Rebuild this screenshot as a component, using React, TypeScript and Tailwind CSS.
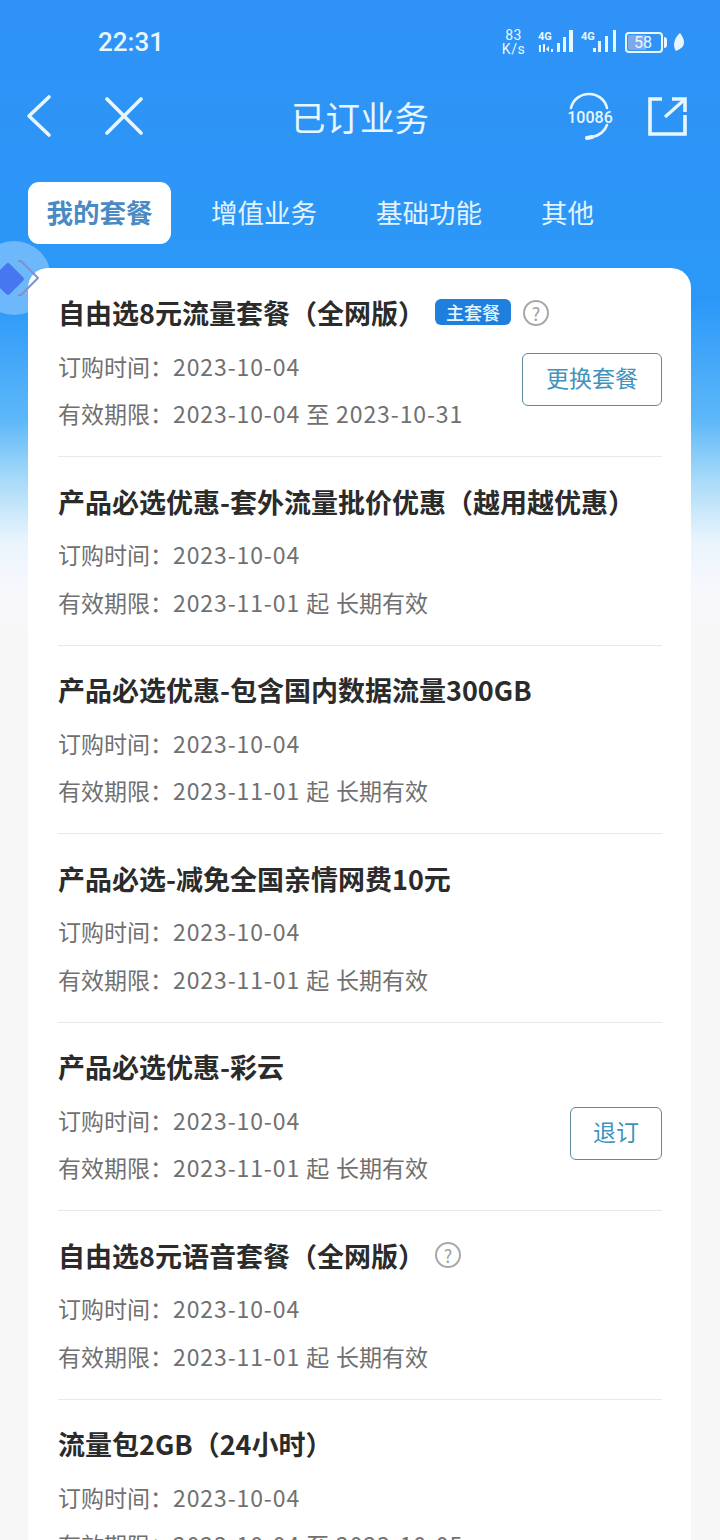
const font = { fontFamily: '"Noto Sans CJK SC", Roboto, sans-serif' };
const roboto = { fontFamily: "Roboto, sans-serif" };

type Item = {
  title: string;
  date: string;
  valid: string;
  note?: string;
  badge?: boolean;
  help?: boolean;
  action?: string;
};

const items: Item[] = [
  { title: "自由选8元流量套餐（全网版）", date: "2023-10-04", valid: "2023-10-04 至 2023-10-31", badge: true, help: true, action: "更换套餐" },
  { title: "产品必选优惠-套外流量批价优惠（越用越优惠）", date: "2023-10-04", valid: "2023-11-01 起", note: "长期有效" },
  { title: "产品必选优惠-包含国内数据流量300GB", date: "2023-10-04", valid: "2023-11-01 起", note: "长期有效" },
  { title: "产品必选-减免全国亲情网费10元", date: "2023-10-04", valid: "2023-11-01 起", note: "长期有效" },
  { title: "产品必选优惠-彩云", date: "2023-10-04", valid: "2023-11-01 起", note: "长期有效", action: "退订" },
  { title: "自由选8元语音套餐（全网版）", date: "2023-10-04", valid: "2023-11-01 起", note: "长期有效", help: true },
  { title: "流量包2GB（24小时）", date: "2023-10-04", valid: "2023-10-04 至 2023-10-05" },
];

function StatusBar() {
  return (
    <div className="h-[84px] pl-[98px] pr-[35px] flex items-center justify-between text-[#e8f7ff]" style={roboto}>
      <span className="text-[26px] font-medium leading-none">22:31</span>
      <div className="flex items-center">
        <div className="text-[14px] leading-[14px] tracking-[0.5px] text-center w-[25px]">83<br />K/s</div>
        <svg width="35" height="24" viewBox="0 0 35 24" className="ml-[12px]" fill="#e8f7ff">
          <text x="0" y="10" fontSize="11" fontWeight="700">4G</text>
          <rect x="1" y="15" width="2" height="7" />
          <path d="M5 14h2v8H5zM8 19l3-3v6z" />
          <rect x="13" y="19" width="2" height="3" />
          <rect x="19" y="13" width="3" height="9" />
          <rect x="25" y="7" width="3" height="15" />
          <rect x="31" y="0" width="4" height="22" />
        </svg>
        <svg width="35" height="24" viewBox="0 0 35 24" className="ml-[8px]" fill="#e8f7ff">
          <text x="0" y="10" fontSize="11" fontWeight="700">4G</text>
          <rect x="12" y="18" width="3" height="4" />
          <rect x="17" y="11" width="3" height="11" />
          <rect x="24" y="6" width="3" height="16" />
          <rect x="32" y="0" width="3" height="22" />
        </svg>
        <div className="ml-[9px] w-[38px] h-[21px] rounded-[4px] border-2 border-[#e8f7ff] p-px relative text-[16px] leading-none">
          <div className="h-full w-[18px] bg-[#7fa8ea] rounded-l-[2px]" />
          <span className="absolute left-[7px] top-[1px]">58</span>
        </div>
        <div className="ml-px w-[3px] h-[11px] bg-[#e8f7ff] rounded-r-sm" />
        <svg width="13" height="18" viewBox="0 0 13 18" className="ml-[5px]" fill="#e8f7ff">
          <path d="M8 0C11 4 13 8 11.5 12C10.5 15 7 16.5 4 18C1 14 1 6 8 0Z" />
        </svg>
      </div>
    </div>
  );
}

function NavBar() {
  return (
    <div className="h-[64px] relative flex items-center text-[#e8f7ff]">
      <svg width="26" height="44" viewBox="0 0 26 44" fill="none" stroke="#e8f7ff" strokeWidth="3.6" strokeLinecap="round" strokeLinejoin="round" className="ml-[26px]">
        <path d="M23 3L3 22L23 41" />
      </svg>
      <svg width="40" height="40" viewBox="0 0 40 40" fill="none" stroke="#e8f7ff" strokeWidth="3.6" strokeLinecap="round" className="ml-[53px]">
        <path d="M2 3L36 37M36 3L2 37" />
      </svg>
      <div className="absolute inset-x-0 top-[15px] text-center text-[34.5px] leading-none">已订业务</div>
      <div className="ml-auto flex items-center">
        <svg width="48" height="48" viewBox="0 0 48 48" fill="none" stroke="#e8f7ff" strokeWidth="2.6" strokeLinecap="round" className="mr-[33px]">
          <path d="M6 16C8 7 16 2 24 2C32 2 40 7 42 16" />
          <path d="M42 33C40 39 34 44 27 45" />
          <path d="M22 46L27 45" strokeWidth="4" />
          <text x="25" y="31" textAnchor="middle" fontSize="16" fontWeight="500" fill="#e8f7ff" stroke="none" style={roboto}>10086</text>
        </svg>
        <svg width="42" height="42" viewBox="0 0 42 42" fill="none" stroke="#e8f7ff" strokeWidth="3.6" className="mr-[32px]">
          <path d="M16 4H4V39H39V20" />
          <path d="M19 22L38 5" strokeWidth="3.2" />
          <path d="M26 4H39V17" />
        </svg>
      </div>
    </div>
  );
}

function Tabs() {
  return (
    <div className="mt-[34px] pl-[28px] flex items-center h-[62px] text-[26.5px] text-[#e2f3ff]">
      <div className="w-[143px] h-[62px] pb-[3px] rounded-[11px] bg-white flex items-center justify-center font-bold text-[#4a8ac4]">我的套餐</div>
      <span className="ml-[40px] pb-[3px]">增值业务</span>
      <span className="ml-[59px] pb-[3px]">基础功能</span>
      <span className="ml-[59px] pb-[3px]">其他</span>
    </div>
  );
}

function Help() {
  return (
    <span className="ml-[10px] w-[26px] h-[26px] rounded-full border-2 border-[#a8a8a8] text-[#a0a0a0] text-[18px] leading-none flex items-center justify-center">?</span>
  );
}

function Row({ item, last }: { item: Item; last: boolean }) {
  return (
    <div className={`relative h-[188.5px] pt-[26px] ${last ? "" : "border-b border-[#e9e9e9]"}`}>
      <div className="flex items-center h-[36px]">
        <h3 className="text-[27px] font-bold text-[#2b2b2b] leading-none whitespace-nowrap">{item.title}</h3>
        {item.badge && (
          <span className="ml-[10px] mr-[2px] mb-[2px] w-[76px] h-[26px] rounded-[6px] bg-[#1f7fdc] text-[#e6f5ff] text-[18px] font-medium flex items-center justify-center leading-none">主套餐</span>
        )}
        {item.help && <Help />}
      </div>
      <div className="mt-[20.4px] flex text-[23px] text-[#707070] leading-[30px]">
        <span>订购时间：</span>
        <span className="tracking-[0.9px]">{item.date}</span>
      </div>
      <div className="mt-[17.3px] flex text-[23px] text-[#707070] leading-[30px] whitespace-pre">
        <span>有效期限：</span>
        <span className="tracking-[0.9px]">{item.valid}</span>
        {item.note && <span className="ml-[6px]">{item.note}</span>}
      </div>
      {item.action && (
        <button className={`absolute right-0 top-[84px] h-[53px] pb-[3px] rounded-[6px] border border-[#5f8aa0] bg-white text-[23px] text-[#3f93bd] leading-none ${item.action === "退订" ? "w-[92px]" : "w-[140px]"}`}>
          {item.action}
        </button>
      )}
    </div>
  );
}

export default function App() {
  return (
    <div
      className="relative w-[720px] h-[1540px] overflow-hidden bg-[linear-gradient(180deg,#2f92f6_0px,#2b98f8_300px,#5db8f8_420px,#a8daf8_480px,#e8f4fd_540px,#f8f8fc_590px,#f7f7f8_630px,#f7f7f8_100%)]"
      style={font}
    >
      <StatusBar />
      <NavBar />
      <Tabs />
      <div className="absolute left-[-23px] top-[241px] w-[74px] h-[74px] rounded-full bg-[#6db7fb]" />
      <main className="relative mt-[24px] mx-[28px] w-[663px] rounded-t-[20px] bg-white pt-[0.6px] pl-[30px] pr-[29px]">
        {items.map((item, i) => (
          <Row key={i} item={item} last={i === items.length - 1} />
        ))}
      </main>
      <svg width="44" height="44" viewBox="0 0 44 44" className="absolute left-0 top-[256px]">
        <rect x="-4" y="11" width="24" height="24" rx="3" transform="rotate(45 8 23)" fill="#4676f0" />
        <path d="M18 5L21 5L38 22L21 39L18 39" fill="none" stroke="#7f92c8" strokeWidth="2" strokeLinejoin="round" />
      </svg>
    </div>
  );
}
